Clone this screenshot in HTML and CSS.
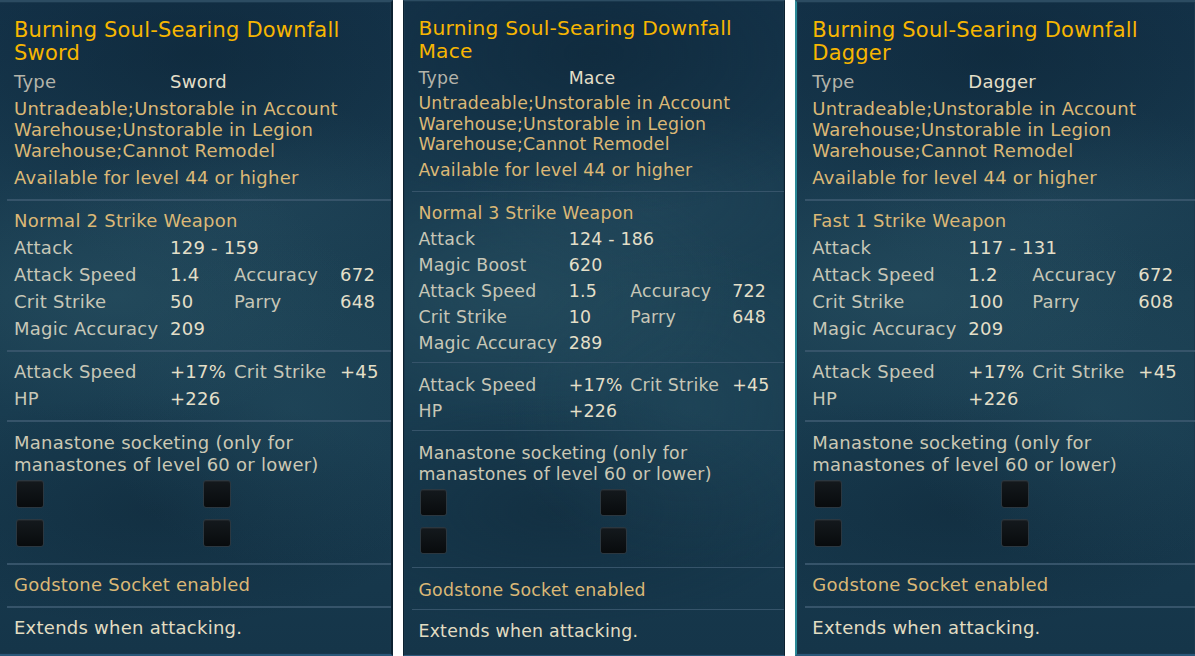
FILE: index.html
```html
<!DOCTYPE html>
<html lang="en">
<head>
    <meta charset="UTF-8">
    <title>Burning Soul-Searing Downfall - Tooltips</title>
    <link rel="stylesheet" href="styles.css">
</head>
<body>
    <div class="card first">
        <section class="block head">
            <h2 class="title">Burning Soul-Searing Downfall<br>Sword</h2>
            <div class="row"><span class="muted">Type</span><span class="val">Sword</span></div>
            <p class="note gold">Untradeable;Unstorable in Account<br>Warehouse;Unstorable in Legion<br>Warehouse;Cannot Remodel</p>
            <div class="row gold">Available for level 44 or higher</div>
        </section>
        <section class="block">
            <div class="row gold">Normal 2 Strike Weapon</div>
            <div class="row"><span>Attack</span><span class="val">129 - 159</span></div>
            <div class="row"><span>Attack Speed</span><span class="val">1.4</span><span>Accuracy</span><span class="val">672</span></div>
            <div class="row"><span>Crit Strike</span><span class="val">50</span><span>Parry</span><span class="val">648</span></div>
            <div class="row"><span>Magic Accuracy</span><span class="val">209</span></div>
        </section>
        <section class="block">
            <div class="row"><span>Attack Speed</span><span class="val">+17%</span><span>Crit Strike</span><span class="val">+45</span></div>
            <div class="row"><span>HP</span><span class="val">+226</span></div>
        </section>
        <section class="block">
            <p class="socket-note">Manastone socketing (only for<br>manastones of level 60 or lower)</p>
            <div class="sockets">
                <div class="socket"></div><div class="socket"></div>
                <div class="socket"></div><div class="socket"></div>
            </div>
        </section>
        <section class="block">
            <div class="row gold">Godstone Socket enabled</div>
        </section>
        <section class="block">
            <div class="row light">Extends when attacking.</div>
        </section>
    </div>

    <div class="card small">
        <section class="block head">
            <h2 class="title">Burning Soul-Searing Downfall<br>Mace</h2>
            <div class="row"><span class="muted">Type</span><span class="val">Mace</span></div>
            <p class="note gold">Untradeable;Unstorable in Account<br>Warehouse;Unstorable in Legion<br>Warehouse;Cannot Remodel</p>
            <div class="row gold">Available for level 44 or higher</div>
        </section>
        <section class="block">
            <div class="row gold">Normal 3 Strike Weapon</div>
            <div class="row"><span>Attack</span><span class="val">124 - 186</span></div>
            <div class="row"><span>Magic Boost</span><span class="val">620</span></div>
            <div class="row"><span>Attack Speed</span><span class="val">1.5</span><span>Accuracy</span><span class="val">722</span></div>
            <div class="row"><span>Crit Strike</span><span class="val">10</span><span>Parry</span><span class="val">648</span></div>
            <div class="row"><span>Magic Accuracy</span><span class="val">289</span></div>
        </section>
        <section class="block">
            <div class="row"><span>Attack Speed</span><span class="val">+17%</span><span>Crit Strike</span><span class="val">+45</span></div>
            <div class="row"><span>HP</span><span class="val">+226</span></div>
        </section>
        <section class="block">
            <p class="socket-note">Manastone socketing (only for<br>manastones of level 60 or lower)</p>
            <div class="sockets">
                <div class="socket"></div><div class="socket"></div>
                <div class="socket"></div><div class="socket"></div>
            </div>
        </section>
        <section class="block">
            <div class="row gold">Godstone Socket enabled</div>
        </section>
        <section class="block">
            <div class="row light">Extends when attacking.</div>
        </section>
    </div>

    <div class="card last">
        <section class="block head">
            <h2 class="title">Burning Soul-Searing Downfall<br>Dagger</h2>
            <div class="row"><span class="muted">Type</span><span class="val">Dagger</span></div>
            <p class="note gold">Untradeable;Unstorable in Account<br>Warehouse;Unstorable in Legion<br>Warehouse;Cannot Remodel</p>
            <div class="row gold">Available for level 44 or higher</div>
        </section>
        <section class="block">
            <div class="row gold">Fast 1 Strike Weapon</div>
            <div class="row"><span>Attack</span><span class="val">117 - 131</span></div>
            <div class="row"><span>Attack Speed</span><span class="val">1.2</span><span>Accuracy</span><span class="val">672</span></div>
            <div class="row"><span>Crit Strike</span><span class="val">100</span><span>Parry</span><span class="val">608</span></div>
            <div class="row"><span>Magic Accuracy</span><span class="val">209</span></div>
        </section>
        <section class="block">
            <div class="row"><span>Attack Speed</span><span class="val">+17%</span><span>Crit Strike</span><span class="val">+45</span></div>
            <div class="row"><span>HP</span><span class="val">+226</span></div>
        </section>
        <section class="block">
            <p class="socket-note">Manastone socketing (only for<br>manastones of level 60 or lower)</p>
            <div class="sockets">
                <div class="socket"></div><div class="socket"></div>
                <div class="socket"></div><div class="socket"></div>
            </div>
        </section>
        <section class="block">
            <div class="row gold">Godstone Socket enabled</div>
        </section>
        <section class="block">
            <div class="row light">Extends when attacking.</div>
        </section>
    </div>
</body>
</html>
```

FILE: styles.css
```css
body {
    margin: 0;
    background: #fff;
    font-family: "DejaVu Sans", Verdana, sans-serif;
    display: flex;
    gap: 10px;
    height: 656px;
    overflow: hidden;
}
.card {
    flex-shrink: 0;
    box-sizing: border-box;
    width: 397px;
    border: 2px solid #0c2130;
    border-top-color: #2c4c62;
    border-bottom-color: #2a587a;
    background-color: #173a4e;
    background-image:
        radial-gradient(ellipse 60% 20% at 30% 45%, rgba(52, 96, 112, 0.3), transparent),
        radial-gradient(ellipse 50% 25% at 75% 62%, rgba(44, 88, 106, 0.25), transparent),
        radial-gradient(ellipse 70% 18% at 40% 78%, rgba(12, 34, 50, 0.4), transparent),
        radial-gradient(ellipse 80% 25% at 50% 8%, rgba(10, 32, 48, 0.45), transparent),
        radial-gradient(ellipse 50% 15% at 65% 30%, rgba(48, 90, 108, 0.25), transparent),
        linear-gradient(to bottom, #14334a, #1b3f52 45%, #183b4f 70%, #153549);
    box-shadow: inset 0 0 0 1px #1a384d;
    font-size: 18px;
    letter-spacing: 0.25px;
    color: #c7c7b7;
}
.card.first {
    margin-left: -3px;
    width: 396px;
}
.card.small {
    zoom: 0.963;
}
.card.last {
    width: 402px;
    border-left-color: #2b8a98;
}
.block {
    margin-left: 8px;
    padding: 6px 0 8px 7px;
    border-top: 2px solid #36546a;
}
.block.head {
    border-top: none;
    padding-top: 17px;
}
.small .block {
    padding-top: 9px;
    padding-bottom: 6px;
}
.small .block.head {
    padding-top: 17px;
    padding-bottom: 8px;
}
.title {
    margin: 0;
    font-size: 21px;
    font-weight: normal;
    line-height: 23px;
    letter-spacing: 0.2px;
    color: #f7b601;
}
.row {
    display: flex;
    line-height: 27px;
    white-space: nowrap;
}
.head .title + .row {
    margin-top: 3px;
}
.row > span:nth-child(1) {
    width: 156px;
}
.row > span:nth-child(2) {
    width: 64px;
}
.row > span:nth-child(3) {
    width: 106px;
}
.val {
    color: #e3dfc8;
}
.muted {
    color: #b4b4aa;
}
.gold {
    color: #dbb876;
}
.light {
    color: #e2ddc2;
}
.note {
    margin: 3px 0;
    line-height: 21px;
}
.socket-note {
    margin: 4px 0 0;
    line-height: 22px;
    color: #cbc8b4;
}
.sockets {
    display: grid;
    grid-template-columns: 187px 28px;
    row-gap: 11px;
    margin-top: 4px;
    margin-bottom: 8px;
    padding-left: 2px;
}
.socket {
    box-sizing: border-box;
    width: 28px;
    height: 28px;
    background: linear-gradient(#14191d, #080b0d);
    border: 1px solid #2b3740;
    border-radius: 3px;
    box-shadow: inset 0 1px 1px rgba(255, 255, 255, 0.06);
}
```
